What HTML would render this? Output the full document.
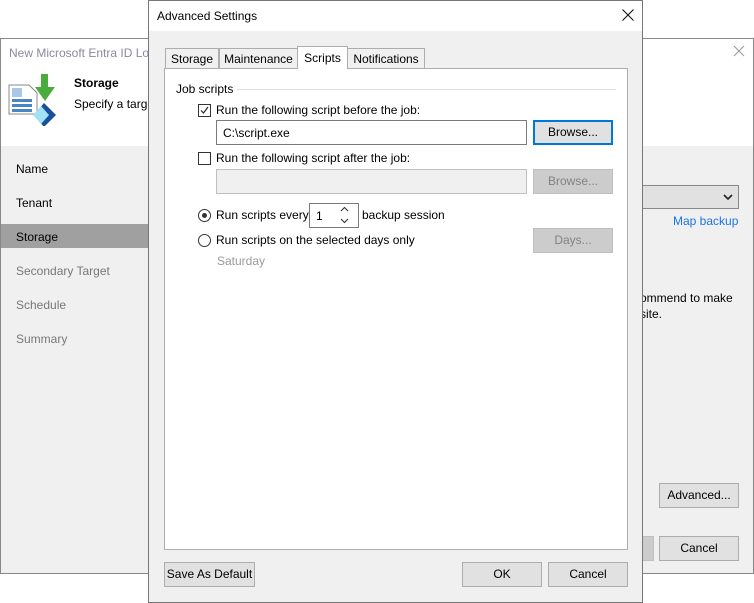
<!DOCTYPE html>
<html><head><style>
*{box-sizing:border-box;margin:0;padding:0}
body{width:754px;height:603px;position:relative;background:#fff;font-family:"Liberation Sans",sans-serif;font-size:12px;color:#000;overflow:hidden}
.a{position:absolute}
.btn{position:absolute;background:#e1e1e1;border:1px solid #adadad;text-align:center;line-height:23px;font-size:12px}
.dis{background:#cccccc;border-color:#bfbfbf;color:#838383}
.cb{position:absolute;width:13px;height:13px;border:1px solid #333;background:#fff}
.rb{position:absolute;width:13px;height:13px;border:1px solid #333;border-radius:50%;background:#fff}
</style></head><body>
<div class="a" style="left:0;top:38px;width:754px;height:536px;border:1px solid #888;background:#f0f0f0"></div>
<div class="a" style="left:1px;top:39px;width:752px;height:107px;background:#fff"></div>
<div class="a" style="left:9px;top:46px;color:#8a8aa0;font-size:12px">New Microsoft Entra ID Lo</div>
<svg class="a" style="left:733px;top:45px" width="12" height="12"><path d="M1 1L11 11M11 1L1 11" stroke="#999" stroke-width="1"/></svg>
<svg class="a" style="left:8px;top:74px" width="52" height="52" viewBox="0 0 52 52">
<path d="M1 11h20l8 8v21H1z" fill="#fff" stroke="#888"/>
<rect x="4" y="14" width="10" height="9" fill="#a9c8e8"/>
<rect x="4" y="25" width="20" height="3" fill="#4a86c6"/><rect x="4" y="30" width="20" height="3" fill="#4a86c6"/><rect x="4" y="35" width="20" height="3" fill="#4a86c6"/>
<path d="M36 29l12 12-12 12-10-12z" fill="#1a4f9c"/><path d="M33 32l8 9-8 9-8-9z" fill="#9fe3f5"/>
<path d="M33 0h7v13h7l-10 14-10-14h6z" fill="#4aac3c"/>
</svg>
<div class="a" style="left:74px;top:76px;font-weight:bold">Storage</div>
<div class="a" style="left:74px;top:97px">Specify a targe</div>
<div class="a" style="left:1px;top:146px;width:147px;height:427px;background:#f0f0f0"></div>
<div class="a" style="left:1px;top:224px;width:147px;height:24px;background:#a0a0a0"></div>
<div class="a" style="left:16px;top:162px">Name</div>
<div class="a" style="left:16px;top:196px">Tenant</div>
<div class="a" style="left:16px;top:230px">Storage</div>
<div class="a" style="left:16px;top:264px;color:#777">Secondary Target</div>
<div class="a" style="left:16px;top:298px;color:#777">Schedule</div>
<div class="a" style="left:16px;top:332px;color:#777">Summary</div>
<div class="a" style="left:640px;top:185px;width:99px;height:24px;background:#e1e1e1;border:1px solid #888"></div>
<svg class="a" style="left:723px;top:194px" width="10" height="6"><path d="M1 1L5 5L9 1" stroke="#222" stroke-width="1.6" fill="none"/></svg>
<div class="a" style="left:673px;top:214px;color:#1a73e8">Map backup</div>
<div class="a" style="left:640px;top:291px">ommend to make</div>
<div class="a" style="left:640px;top:307px">site.</div>
<div class="btn" style="left:659px;top:483px;width:80px;height:25px">Advanced...</div>
<div class="a" style="left:640px;top:536px;width:14px;height:25px;background:#ccc;border:1px solid #bfbfbf"></div>
<div class="btn" style="left:659px;top:536px;width:80px;height:25px">Cancel</div>

<div class="a" style="left:148px;top:0;width:495px;height:603px;border:1px solid #777;background:#f0f0f0"></div>
<div class="a" style="left:149px;top:1px;width:493px;height:30px;background:#fff"></div>
<div class="a" style="left:157px;top:9px">Advanced Settings</div>
<svg class="a" style="left:622px;top:9px" width="12" height="12"><path d="M0.5 0.5L11.5 11.5M11.5 0.5L0.5 11.5" stroke="#111" stroke-width="1.1"/></svg>
<div class="a" style="left:164px;top:68px;width:464px;height:482px;background:#fff;border:1px solid #adadad"></div>
<div class="a" style="left:165px;top:48px;width:54px;height:21px;background:#f0f0f0;border:1px solid #adadad;text-align:center;line-height:20px">Storage</div>
<div class="a" style="left:219px;top:48px;width:79px;height:21px;background:#f0f0f0;border:1px solid #adadad;text-align:center;line-height:20px">Maintenance</div>
<div class="a" style="left:297px;top:46px;width:51px;height:23px;background:#fff;border:1px solid #adadad;border-bottom:none;text-align:center;line-height:22px">Scripts</div>
<div class="a" style="left:347px;top:48px;width:78px;height:21px;background:#f0f0f0;border:1px solid #adadad;text-align:center;line-height:20px">Notifications</div>
<div class="a" style="left:176px;top:82px">Job scripts</div>
<div class="a" style="left:237px;top:89px;width:379px;height:1px;background:#ddd"></div>
<div class="cb" style="left:198px;top:104px"></div>
<svg class="a" style="left:199px;top:105px" width="11" height="11"><path d="M2 5.5L4.5 8L9 2" stroke="#222" stroke-width="1.2" fill="none"/></svg>
<div class="a" style="left:216px;top:103px">Run the following script before the job:</div>
<div class="a" style="left:216px;top:120px;width:311px;height:25px;background:#fff;border:1px solid #7a7a7a;padding:5px 6px">C:\script.exe</div>
<div class="btn" style="left:533px;top:120px;width:80px;height:25px;border:2px solid #0078d7;line-height:21px">Browse...</div>
<div class="cb" style="left:198px;top:152px"></div>
<div class="a" style="left:216px;top:151px">Run the following script after the job:</div>
<div class="a" style="left:216px;top:169px;width:311px;height:25px;background:#f0f0f0;border:1px solid #bfbfbf"></div>
<div class="btn dis" style="left:533px;top:169px;width:80px;height:25px">Browse...</div>
<div class="rb" style="left:198px;top:209px"></div>
<div class="a" style="left:202px;top:213px;width:5px;height:5px;border-radius:50%;background:#333"></div>
<div class="a" style="left:216px;top:208px">Run scripts every</div>
<div class="a" style="left:309px;top:203px;width:50px;height:25px;background:#fff;border:1px solid #7a7a7a;padding:5px 6px">1</div>
<svg class="a" style="left:340px;top:206px" width="9" height="18"><path d="M1 5L4.5 1.5L8 5M1 13L4.5 16.5L8 13" stroke="#333" stroke-width="1.1" fill="none"/></svg>
<div class="a" style="left:362px;top:208px">backup session</div>
<div class="rb" style="left:198px;top:234px"></div>
<div class="a" style="left:216px;top:233px">Run scripts on the selected days only</div>
<div class="btn dis" style="left:533px;top:228px;width:80px;height:25px">Days...</div>
<div class="a" style="left:217px;top:254px;color:#999">Saturday</div>
<div class="btn" style="left:164px;top:562px;width:91px;height:25px">Save As Default</div>
<div class="btn" style="left:462px;top:562px;width:80px;height:25px">OK</div>
<div class="btn" style="left:548px;top:562px;width:80px;height:25px">Cancel</div>
</body></html>
